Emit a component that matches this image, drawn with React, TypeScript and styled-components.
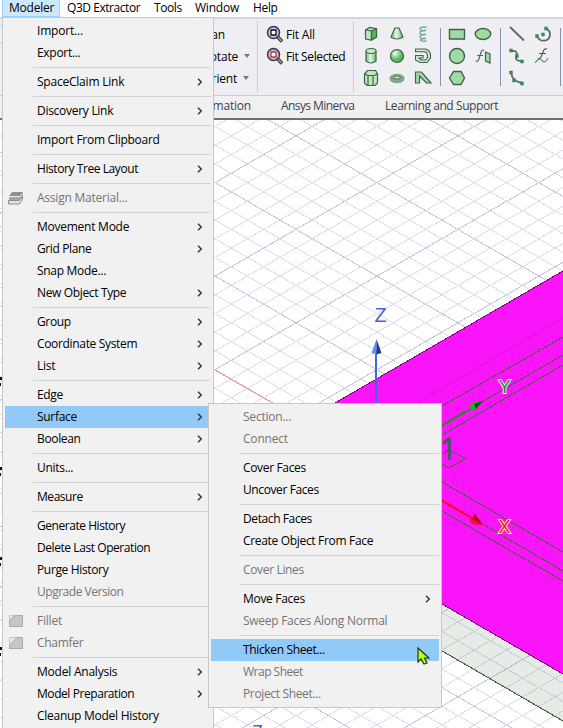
import React from "react";
import styled, { createGlobalStyle, css } from "styled-components";

const Global = createGlobalStyle`
  * { box-sizing: border-box; }
  body { margin: 0; overflow: hidden; background: #fff; }
`;

const Shell = styled.div`
  position: relative;
  width: 563px;
  height: 728px;
  overflow: hidden;
  display: flex;
  flex-direction: column;
  font: 12px "Open Sans", "Noto Sans", sans-serif;
  letter-spacing: -0.22px;
  color: #000;
  white-space: nowrap;
`;

const MenuBar = styled.nav`
  display: flex;
  flex: 0 0 17px;
  height: 17px;
  padding-left: 2px;
  background: #fff;
`;

const MenuTitle = styled.span<{ $width: number; $open?: boolean; $track?: number }>`
  width: ${(p) => p.$width}px;
  height: 17px;
  padding-left: 7px;
  line-height: 16px;
  letter-spacing: ${(p) => p.$track ?? -0.22}px;
  ${(p) => p.$open && css`
    background: #cce8ff;
    border: solid #99d1ff;
    border-width: 0 1px 1px;
    padding-left: 6px;
  `}
`;

const Ribbon = styled.div`
  display: flex;
  flex: 0 0 79px;
  height: 79px;
  padding-top: 2px;
  background: #efeff3;
  border-top: 2px solid #d6d6e2;
  border-bottom: 1px solid #cdcddd;
`;

const Group = styled.div<{ $width: number }>`
  width: ${(p) => p.$width}px;
  height: 71px;
  border-right: 1px solid #c9c9dc;
`;

const ViewCommands = styled(Group)`
  display: flex;
  flex-direction: column;
  padding-top: 2px;
`;

const Command = styled.div<{ $end: number }>`
  display: flex;
  align-items: center;
  justify-content: flex-end;
  width: ${(p) => p.$end}px;
  height: 22px;
  letter-spacing: -0.2px;
`;

const DropArrow = styled.i`
  width: 0;
  margin-left: 6px;
  border: solid transparent;
  border-width: 4px 3px 0;
  border-top-color: #777;
`;

const FitCommands = styled(Group)`
  display: flex;
  flex-direction: column;
  padding: 2px 0 0 8px;
`;

const FitCommand = styled.div<{ $track: number }>`
  display: flex;
  align-items: center;
  gap: 2px;
  height: 22px;
  letter-spacing: ${(p) => p.$track}px;
`;

const IconGroup = styled.div<{ $width: number; $cols: number; $left: number }>`
  display: grid;
  width: ${(p) => p.$width}px;
  height: 66px;
  margin-top: 2px;
  grid-template-columns: repeat(${(p) => p.$cols}, 26px);
  grid-auto-rows: 22px;
  align-content: start;
  padding-left: ${(p) => p.$left}px;
  background: linear-gradient(#8494ae, #8494ae) right 5px / 1px 58px no-repeat;
  svg { width: 18px; height: 18px; margin: 2px 4px; display: block; overflow: visible; }
`;

const Tabs = styled.div`
  display: flex;
  flex: 0 0 24px;
  height: 24px;
  background: #f0f0f0;
  border-bottom: 2px solid #707070;
  color: #41414d;
  line-height: 19px;
`;

const Tab = styled.span<{ $width: number; $right?: boolean; $track?: number }>`
  width: ${(p) => p.$width}px;
  padding-left: ${(p) => (p.$right ? 0 : 30)}px;
  text-align: ${(p) => (p.$right ? "right" : "left")};
  letter-spacing: ${(p) => p.$track ?? -0.2}px;
`;

const Viewport = styled.svg`
  display: block;
  flex: 0 0 608px;
  width: 563px;
  height: 608px;
`;

const Popup = styled.div<{ $x: number; $y: number; $w: number; $h: number }>`
  position: absolute;
  left: ${(p) => p.$x}px;
  top: ${(p) => p.$y}px;
  width: ${(p) => p.$w}px;
  height: ${(p) => p.$h}px;
  padding: 2px;
  background: #f1f1f1;
  border: 1px solid #c8c8c8;
`;

const Item = styled.div<{ $disabled?: boolean; $active?: boolean }>`
  display: grid;
  grid-template-columns: 32px 1fr 14px;
  align-items: center;
  height: 22px;
  color: ${(p) => (p.$disabled ? "#757575" : "#000")};
  background: ${(p) => (p.$active ? "#91c9f7" : "transparent")};
  svg { display: block; }
`;

const ItemIcon = styled.span`
  padding-left: 2px;
`;

const ItemLabel = styled.span<{ $track: number }>`
  line-height: 18px;
  letter-spacing: ${(p) => p.$track}px;
`;

const ItemArrow = styled.svg`
  margin-bottom: 1px;
`;

const Rule = styled.hr`
  height: 1px;
  margin: 3px 0 3px 28px;
  border: 0;
  background: #d3d3d3;
`;

const PointerLayer = styled.svg`
  position: absolute;
  left: 417px;
  top: 647px;
  width: 13px;
  height: 19px;
`;

const HistoryEdge = styled.div`
  position: absolute;
  left: 0;
  top: 17px;
  width: 2px;
  height: 711px;
  svg { display: block; }
`;

type Entry = { label: string; sub?: boolean; off?: boolean; icon?: React.ReactNode; track?: number } | null;

const MaterialIcon = () => (
  <svg width="17" height="16" viewBox="0 0 17 16">
    <path d="M5 2h11l-3 4H2z" fill="#8f8f8f" />
    <path d="M2 7h11l3-4v3l-3 4H2z" fill="#a6a6a6" />
    <path d="M1.500 10.500h11l3-4v3l-3 4.500h-11z" fill="#e2e2e2" stroke="#8c8c8c" />
  </svg>
);

const CornerIcon = ({ round }: { round?: boolean }) => (
  <svg width="17" height="14" viewBox="-1 0 17 14">
    <path d="M1.500 1.500h13v11h-13z" fill="#e9e9e9" stroke="#c4c4c4" />
    <path d={round ? "M1.500 12.500V9Q3 2 9.500 1.500h5v11z" : "M1.500 12.500V9L9 1.500h5.500v11z"} fill="#c7c7c7" stroke="#aaa" />
  </svg>
);

const Chevron = () => (
  <ItemArrow width="6" height="8" viewBox="0 0 6 8">
    <path d="M1 .7 4.300 4 1 7.300" fill="none" stroke="#333" strokeWidth="1.400" />
  </ItemArrow>
);

const modeler: Entry[] = [
  { label: "Import...", track: -0.2 }, { label: "Export...", track: -0.3 }, null,
  { label: "SpaceClaim Link", sub: true }, null,
  { label: "Discovery Link", sub: true, track: -0.28 }, null,
  { label: "Import From Clipboard", track: -0.27 }, null,
  { label: "History Tree Layout", sub: true, track: -0.42 }, null,
  { label: "Assign Material...", off: true, icon: <MaterialIcon /> }, null,
  { label: "Movement Mode", sub: true, track: -0.25 }, { label: "Grid Plane", sub: true, track: -0.38 },
  { label: "Snap Mode...", track: -0.3 }, { label: "New Object Type", sub: true, track: -0.35 }, null,
  { label: "Group", sub: true, track: -0.35 }, { label: "Coordinate System", sub: true, track: -0.33 }, { label: "List", sub: true }, null,
  { label: "Edge", sub: true, track: -0.35 }, { label: "Surface", sub: true, track: -0.3 }, { label: "Boolean", sub: true, track: -0.35 }, null,
  { label: "Units...", track: -0.3 }, null,
  { label: "Measure", sub: true, track: -0.45 }, null,
  { label: "Generate History", track: -0.45 }, { label: "Delete Last Operation", track: -0.43 }, { label: "Purge History", track: -0.35 },
  { label: "Upgrade Version", off: true, track: -0.48 }, null,
  { label: "Fillet", off: true, icon: <CornerIcon round /> }, { label: "Chamfer", off: true, icon: <CornerIcon />, track: -0.3 }, null,
  { label: "Model Analysis", sub: true }, { label: "Model Preparation", sub: true, track: -0.43 }, { label: "Cleanup Model History", track: -0.27 },
];

const surface: Entry[] = [
  { label: "Section...", off: true }, { label: "Connect", off: true, track: -0.2 }, null,
  { label: "Cover Faces", track: -0.34 }, { label: "Uncover Faces", track: -0.4 }, null,
  { label: "Detach Faces", track: -0.4 }, { label: "Create Object From Face", track: -0.32 }, null,
  { label: "Cover Lines", off: true, track: -0.34 }, null,
  { label: "Move Faces", sub: true, track: -0.3 }, { label: "Sweep Faces Along Normal", off: true, track: -0.27 }, null,
  { label: "Thicken Sheet...", track: -0.35 }, { label: "Wrap Sheet", off: true, track: -0.5 }, { label: "Project Sheet...", off: true, track: -0.35 },
];

const Entries = ({ items, active }: { items: Entry[]; active: string }) => (
  <>
    {items.map((e, i) =>
      e ? (
        <Item key={i} $disabled={e.off} $active={e.label === active}>
          <ItemIcon>{e.icon}</ItemIcon>
          <ItemLabel $track={e.track ?? -0.22}>{e.label}</ItemLabel>
          {e.sub && <Chevron />}
        </Item>
      ) : (
        <Rule key={i} />
      )
    )}
  </>
);

const Magnifier = ({ red }: { red?: boolean }) => (
  <svg width="18" height="18" viewBox="0 0 18 18">
    <path d="m11 11 5 5.500" stroke="#33332c" strokeWidth="3.400" />
    <path d="m12 12 3.500 4" stroke="#aaa184" strokeWidth="1.500" />
    <circle cx="7.500" cy="7.500" r="6" fill={red ? "#d9b4bb" : "#c3cbe8"} stroke="#33334d" strokeWidth="1.500" />
    <path d="M5 5h5v5H5z" fill="#fff" stroke={red ? "#a83f46" : "#111"} strokeWidth="1.300" />
  </svg>
);

const INK = "#45604a";
const FILL = "#a0dba5";

const Sketch = ({ children }: { children: React.ReactNode }) => (
  <svg viewBox="0 0 18 18" fill="none" stroke={INK} strokeWidth="1.200">{children}</svg>
);

const Knots = ({ at }: { at: number[][] }) => (
  <>{at.map(([x, y]) => <path key={`${x}-${y}`} d={`M${x - 1} ${y - 1}h2v2h-2z`} fill="#b9efc4" stroke="#23874c" strokeWidth="1.300" />)}</>
);

const Gradients = () => (
  <defs>
    <radialGradient id="ball" cx=".35" cy=".3"><stop stopColor="#f4fff4" /><stop offset="1" stopColor="#55b85c" /></radialGradient>
    <linearGradient id="tube"><stop stopColor="#6cc173" /><stop offset=".45" stopColor="#e0f8df" /><stop offset="1" stopColor="#64b56b" /></linearGradient>
  </defs>
);

const solids = [
  <Sketch key="box"><path d="m3.500 5 4-2.500 7 1.300v8L9.500 15l-6-1z" fill="#b9e8bb" /><path d="m9.500 6 5-2v8l-5 3z" fill="#4dbb58" /><path d="m3.500 5 6 1v9" /></Sketch>,
  <Sketch key="cone"><path d="M7 3h4l4 9q-6 4-12 0z" fill="url(#tube)" /></Sketch>,
  <Sketch key="helix"><path d="M12.500 2.200Q5 1.500 6 4q1 2 6 1.500Q5 5.500 6 8q1 2 6 1.500Q5 9.500 6 12q1 2 6 1.500Q6 13.500 6.500 15.300q2 1.500 6 .7" stroke="#6aaa91" strokeWidth="1.400" /></Sketch>,
  <Sketch key="cyl"><path d="M4 4v10q5 4 10 0V4" fill="url(#tube)" /><ellipse cx="9" cy="4" rx="5" ry="2.500" fill="#c6edc6" /></Sketch>,
  <Sketch key="ball"><circle cx="9" cy="9" r="6.500" fill="url(#ball)" /></Sketch>,
  <Sketch key="spiral"><path d="M1.500 2h9.500q5.500 1 5.500 6.500v2.500L13 15.500H6L1.500 13V8.500H9v2.500H5L7 13h4.500l2-2.500V8q-.5-3-3-3.300h-9z" fill="#cdeccf" strokeWidth="1.100" /></Sketch>,
  <Sketch key="prism"><path d="m2.500 5 3-3.500h8L15.500 5v9L13 16.500H5L2.500 14z" fill="#bdeabc" /><path d="M2.500 5 6 6.500h6L15.500 5M6 7v9m5-9v9" /></Sketch>,
  <Sketch key="torus"><ellipse cx="9" cy="9.500" rx="7" ry="4.200" fill="#84a98a" stroke="#86a58b" /><ellipse cx="9" cy="8.500" rx="3.500" ry="1.400" fill="#e4e9e5" stroke="#628468" /></Sketch>,
  <Sketch key="bend"><path d="M1.500 3h6l9.500 11h-4.500L5.500 7v7h-4z" fill={FILL} /></Sketch>,
];

const sheets = [
  <Sketch key="rect"><path d="M1.500 4.500h15v9.500h-15z" fill={FILL} strokeWidth="1.400" /></Sketch>,
  <Sketch key="ell"><ellipse cx="9" cy="9" rx="7.700" ry="5.500" fill={FILL} strokeWidth="1.400" /></Sketch>,
  <Sketch key="circle"><circle cx="9" cy="9" r="7.500" fill={FILL} strokeWidth="1.400" /></Sketch>,
  <Sketch key="eqs"><path d="M10 3.500Q8 2 7 5.500L4.500 13q-1 2-3 1M3 8.500h6" stroke="#5a645c" /><path d="m11.500 5 4.500 2v9l-4.500-2z" fill={FILL} /></Sketch>,
  <Sketch key="hex"><path d="M5.500 2.500h7.500L16.500 9 13 15.500H5.500L1.500 9z" fill={FILL} strokeWidth="1.400" /></Sketch>,
];

const curves = [
  <Sketch key="line"><path d="m2 2 14 13.500" stroke="#666" strokeWidth="1.900" /></Sketch>,
  <Sketch key="arc"><path d="M3 11c3 7 13 6 13-2q0-3-3-5" stroke="#666" strokeWidth="1.800" /><Knots at={[[3, 11], [9, 9.500], [12, 3.500]]} /></Sketch>,
  <Sketch key="spline"><path d="M3 4q8-1 5 6-1 4 6 4" stroke="#666" strokeWidth="1.800" /><Knots at={[[3, 3.500], [9, 9], [14, 14.500]]} /></Sketch>,
  <Sketch key="eqc"><path d="M13 2q-3-1-4 3l-2 5q-1 2-3 1.500M5 6.500h7" stroke="#555" /><path d="M1 16q4-6 7-2.500t6-2.500" stroke="#52a968" /></Sketch>,
  <Sketch key="arc3"><path d="M3 3q1 10 12 11" stroke="#666" strokeWidth="1.800" /><Knots at={[[3, 3.500], [6, 11.500], [14, 14.500]]} /></Sketch>,
];

const Scene = () => {
  const slope = 0.5774;
  const step = 18.7;
  const rows = Array.from({ length: 61 }, (_, i) => i - 25);
  const paths = (major: boolean) =>
    rows
      .filter((k) => (k % 5 === 0) === major)
      .map((k) => {
        const y = 182.6 + k * step;
        return `M0 ${y - 377 * slope}L563 ${y + 186 * slope}M0 ${y + 377 * slope}L563 ${y - 186 * slope}`;
      })
      .join("");
  return (
    <Viewport viewBox="0 120 563 608">
      <Gradients />
      <g fill="none" shapeRendering="crispEdges">
        <path d={paths(false)} stroke="#dedeed" />
        <path d={paths(true)} stroke="#c6c6e0" />
        <path d="M214 369.500 377 463" stroke="#ea9999" />
      </g>
      <path d="m335 542 228 132v47L335 589z" fill="#53714d" fillOpacity=".14" />
      <path d="M335 403 563 271v403L335 542z" fill="#fa14fa" />
      <g fill="none" shapeRendering="crispEdges">
        <path d="m335 403 228-132M442 604l121 70" stroke="#7b087b" />
        <path d="m442 651 121 70" stroke="#42603f" />
        <path d="m417 403 146-85" stroke="#e50ee5" />
        <path d="m442 406 121-69M480 403l83-48M442 435l121-70M442 482l121 70M484 525l79 46M442 511l121 70M442 454l7-4 17 8.500-17 9.500-7-4" stroke="#46643c" />
        <path d="m420 438 54-31" stroke="#149414" strokeWidth="2" />
        <path d="m420 488 52 30" stroke="#ff0b0b" strokeWidth="2" />
        <path d="M376 350v60" stroke="#3d67d8" strokeWidth="2" />
      </g>
      <path d="m376.500 339-5 14 5 1.500z" fill="#5b91fa" /><path d="m376.500 339 5 14-5 1.500z" fill="#26397d" />
      <path d="m470 405 5-3 8-.5-8 8-4 1.500z" fill="#17b417" /><path d="m474 404 9-3-7 8z" fill="#075007" />
      <path d="m470 520 5-6 8 11-11-1z" fill="#f01414" /><path d="m475 514 8 11-10-6z" fill="#a60f1f" />
      <text x="374.500" y="322" fontFamily="Liberation Sans" fontSize="20" fill="#4468d6">Z</text>
      <g fontFamily="Liberation Sans" fontSize="18" strokeWidth="2" paintOrder="stroke">
        <text x="498.500" y="393" fill="#148d14" stroke="#f8e6f8">Y</text>
        <text x="498.500" y="533" fill="#f01919" stroke="#fbe6a8">X</text>
      </g>
      <text x="440" y="459" fontFamily="Open Sans" fontSize="29" fill="#415e42" stroke="#415e42" strokeWidth=".8">1</text>
      <text x="252" y="738" fontFamily="Liberation Sans" fontSize="18" fill="#4468d6">Z</text>
    </Viewport>
  );
};

export default function App() {
  return (
    <Shell>
      <Global />
      <MenuBar>
        <MenuTitle $width={58} $open>Modeler</MenuTitle>
        <MenuTitle $width={87} $track={-0.45}>Q3D Extractor</MenuTitle>
        <MenuTitle $width={41} $track={-0.4}>Tools</MenuTitle>
        <MenuTitle $width={58}>Window</MenuTitle>
        <MenuTitle $width={50} $track={-0.35}>Help</MenuTitle>
      </MenuBar>
      <Ribbon>
        <ViewCommands $width={258}>
          <Command $end={225}>Pan</Command>
          <Command $end={250}>Rotate<DropArrow /></Command>
          <Command $end={249}>Orient<DropArrow /></Command>
        </ViewCommands>
        <FitCommands $width={96}>
          <FitCommand $track={-0.2}><Magnifier />Fit All</FitCommand>
          <FitCommand $track={-0.38}><Magnifier red />Fit Selected</FitCommand>
        </FitCommands>
        <IconGroup $width={87} $cols={3} $left={4}>{solids}</IconGroup>
        <IconGroup $width={60} $cols={2} $left={3}>{sheets}</IconGroup>
        <IconGroup $width={60} $cols={2} $left={3}>{curves}</IconGroup>
      </Ribbon>
      <Tabs>
        <Tab $width={251} $right>Automation</Tab>
        <Tab $width={104} $track={-0.58}>Ansys Minerva</Tab>
        <Tab $width={180} $track={-0.42}>Learning and Support</Tab>
      </Tabs>
      <Scene />
      <HistoryEdge>
        <svg width="2" height="711" viewBox="0 17 2 711">
          <path d="M0 26h2M0 43h2" stroke="#ccc" />
          <path d="M0 377h2v3H0zm0 6h1v3H0zM0 467h2v3H0zm0 6h1v3H0zM0 557h2v3H0zm0 6h1v3H0zM0 647h2v3H0zm0 6h1v3H0z" fill="#111" />
        </svg>
      </HistoryEdge>
      <Popup $x={2} $y={17} $w={212} $h={716}><Entries items={modeler} active="Surface" /></Popup>
      <Popup $x={208} $y={403} $w={234} $h={305}><Entries items={surface} active="Thicken Sheet..." /></Popup>
      <PointerLayer viewBox="0 0 13 19">
        <path d="M1 1v14l3-3 3 5 3-1-2.500-5H12z" fill="#baff00" stroke="#24351b" strokeWidth="1.200" />
      </PointerLayer>
    </Shell>
  );
}
